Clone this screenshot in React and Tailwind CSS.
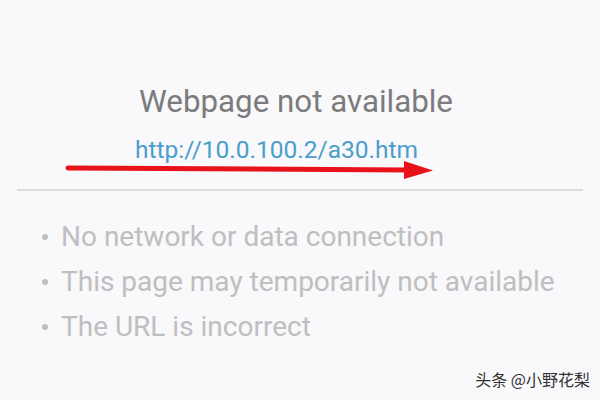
export default function App() {
  const reasons = [
    'No network or data connection',
    'This page may temporarily not available',
    'The URL is incorrect',
  ];

  return (
    <div className="relative h-[400px] w-[600px] overflow-hidden bg-[#f9f8fa] font-['Roboto',sans-serif]">
      {/* Titre et adresse */}
      <div className="flex flex-col items-center pt-[83px]">
        <h1 className="pr-[8px] text-[31.3px] leading-[38px] text-[#7b7b7d]">Webpage not available</h1>
        <p className="mt-[15px] pr-[47px] text-[24.5px] leading-[28px] text-[#4a9fca]">http://10.0.100.2/a30.htm</p>
      </div>

      {/* Séparateur */}
      <div className="mx-[17px] mt-[25px] h-[2px] bg-[#dcdbdd]" />

      {/* Raisons possibles */}
      <ul className="mt-[30px] flex flex-col gap-[13px] pl-[42px]">
        {reasons.map((r) => (
          <li key={r} className="flex items-center text-[28px] leading-[32px] text-[#bfbec0]">
            <span className="mr-[13px] h-[6px] w-[6px] rounded-full bg-[#bfbec0]" />
            {r}
          </li>
        ))}
      </ul>

      {/* Flèche rouge (annotation) */}
      <svg className="absolute left-0 top-0" width="600" height="400" viewBox="0 0 600 400">
        <line x1="68" y1="168" x2="408" y2="170" stroke="#e8121a" strokeWidth="5" strokeLinecap="round" />
        <polygon points="404,161 433,170.5 404,179" fill="#e8121a" />
      </svg>

      {/* Filigrane */}
      <span className="absolute bottom-[9px] right-[10px] text-[16px] text-[#333] font-['Noto_Sans_CJK_SC',sans-serif]">
        头条 @小野花梨
      </span>
    </div>
  );
}
